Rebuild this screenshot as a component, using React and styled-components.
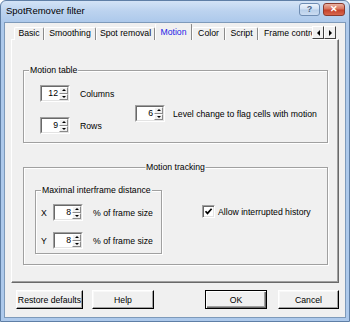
import React from "react";
import styled, { createGlobalStyle } from "styled-components";

const GlobalStyle = createGlobalStyle`
  html, body { margin: 0; padding: 0; }
  body {
    width: 350px; height: 322px; overflow: hidden; background: #fff;
    font-family: "Liberation Sans", Arial, sans-serif; font-size: 8.7px; color: #000;
  }
  #root { width: 350px; height: 322px; }
`;

const Window = styled.div`
  box-sizing: border-box;
  width: 350px;
  height: 322px;
  border: 1px solid #5f7fa6;
  border-radius: 6px 6px 0 0;
  background: linear-gradient(#d3e3f6 0px, #bcd3ef 10px, #adc9eb 21px, #adc9eb 100%);
  display: flex;
  flex-direction: column;
  padding: 0 3px 3px;
`;

const TitleBar = styled.div`
  height: 21px;
  display: flex;
  align-items: flex-start;
  padding: 0 1px 0 2px;
`;

const Title = styled.span`
  font-size: 9.5px;
  line-height: 12px;
  margin-top: 4px;
  color: #000;
`;

const CaptionButtons = styled.div`
  margin-left: auto;
  margin-top: 2px;
  display: flex;
  gap: 3px;
`;

const CaptionButton = styled.div`
  box-sizing: border-box;
  width: ${(p) => p.$w}px;
  height: 13px;
  border: 1px solid ${(p) => (p.$close ? "#8a3a2e" : "#6f8db3")};
  border-radius: 3px;
  background: ${(p) =>
    p.$close
      ? "linear-gradient(#eab3a4 0%, #d9735c 45%, #c4412b 55%, #d8664c 100%)"
      : "linear-gradient(#eef4fb 0%, #d3e2f4 45%, #b9cfea 55%, #cbdcf1 100%)"};
  display: flex;
  align-items: center;
  justify-content: center;
  font-size: 9px;
  font-weight: bold;
  color: ${(p) => (p.$close ? "#fff" : "#4a6384")};
  line-height: 1;
`;

const Client = styled.div`
  flex: 1;
  background: #f0f0f0;
  border: 1px solid #7e9aba;
  display: flex;
  flex-direction: column;
  padding: 1px 6px 0;
`;

const TabStrip = styled.div`
  display: flex;
  align-items: flex-end;
  height: 16px;
  margin-left: 3px;
  margin-bottom: -1px;
  position: relative;
  z-index: 1;
`;

const TabList = styled.div`
  display: flex;
  align-items: flex-end;
  width: 298px;
  height: 16px;
  overflow: hidden;
`;

const Tab = styled.div`
  flex: 0 0 auto;
  box-sizing: border-box;
  width: ${(p) => p.$w}px;
  height: ${(p) => (p.$active ? 17 : 13)}px;
  padding-top: ${(p) => (p.$active ? 3 : 0)}px;
  border-left: 1px solid #fff;
  border-top: 1px solid #fff;
  border-right: 1px solid #8a8a8a;
  border-radius: 2px 2px 0 0;
  background: #f0f0f0;
  color: ${(p) => (p.$active ? "#1c1ce6" : "#000")};
  text-align: ${(p) => (p.$clip ? "left" : "center")};
  padding-left: ${(p) => (p.$clip ? 5 : 0)}px;
  white-space: nowrap;
  line-height: 11px;
`;

const TabArrows = styled.div`
  display: flex;
  margin-bottom: 1px;
`;

const ArrowButton = styled.div`
  box-sizing: border-box;
  width: 12px;
  height: 13px;
  background: #f0f0f0;
  border: 1px solid;
  border-color: #fff #404040 #404040 #fff;
  display: flex;
  align-items: center;
  justify-content: center;
  &::after {
    content: "";
    border-top: 3px solid transparent;
    border-bottom: 3px solid transparent;
    ${(p) => (p.$left ? "border-right: 3px solid #000;" : "border-left: 3px solid #000;")}
  }
`;

const Panel = styled.div`
  box-sizing: border-box;
  height: 244px;
  border: 1px solid;
  border-color: #fff #696969 #696969 #fff;
  box-shadow: inset -1px -1px 0 #a0a0a0;
  padding: 30px 10px 0 11px;
  display: flex;
  flex-direction: column;
`;

const Group = styled.div`
  position: relative;
  box-sizing: border-box;
  width: ${(p) => (p.$w ? `${p.$w}px` : "auto")};
  height: ${(p) => p.$h}px;
  margin-top: ${(p) => p.$mt || 0}px;
  border: 1px solid #a0a0a0;
  box-shadow: inset 1px 1px 0 #fff, 1px 1px 0 #fff;
  padding: ${(p) => p.$pad};
  display: flex;
  align-items: flex-start;
  flex-shrink: 0;
`;

const GroupLabel = styled.span`
  position: absolute;
  top: -6px;
  left: ${(p) => (p.$center ? "50%" : `${p.$left}px`)};
  transform: ${(p) => (p.$center ? "translateX(-50%)" : "none")};
  background: #f0f0f0;
  padding: 0 1px;
  line-height: 11px;
  white-space: nowrap;
`;

const Column = styled.div`
  display: flex;
  flex-direction: column;
  gap: ${(p) => p.$gap || 0}px;
  width: ${(p) => (p.$w ? `${p.$w}px` : "auto")};
  padding-top: ${(p) => p.$pt || 0}px;
`;

const SpinRow = styled.div`
  display: flex;
  align-items: center;
  gap: ${(p) => p.$gap}px;
  white-space: nowrap;
`;

const SpinOuter = styled.div`
  box-sizing: border-box;
  width: 30px;
  height: 17px;
  border: 1px solid;
  border-color: #a0a0a0 #fff #fff #a0a0a0;
  display: flex;
`;

const SpinInner = styled.div`
  flex: 1;
  display: flex;
  background: #fff;
  border: 1px solid;
  border-color: #696969 #e3e3e3 #e3e3e3 #696969;
`;

const SpinValue = styled.span`
  flex: 1;
  text-align: right;
  line-height: 13px;
  padding-right: 1px;
`;

const SpinButtons = styled.div`
  width: 9px;
  display: flex;
  flex-direction: column;
`;

const SpinButton = styled.div`
  flex: 1;
  box-sizing: border-box;
  background: #f0f0f0;
  border: 1px solid;
  border-color: #fff #8a8a8a #8a8a8a #fff;
  display: flex;
  align-items: center;
  justify-content: center;
  &::after {
    content: "";
    border-left: 2px solid transparent;
    border-right: 2px solid transparent;
    ${(p) => (p.$up ? "border-bottom: 2px solid #000;" : "border-top: 2px solid #000;")}
  }
`;

const AxisGrid = styled.div`
  display: grid;
  grid-template-columns: 12px 30px auto;
  row-gap: 11px;
  align-items: center;
  white-space: nowrap;
`;

const AxisText = styled.span`
  margin-left: ${(p) => p.$ml || 0}px;
`;

const CheckRow = styled.label`
  display: flex;
  align-items: center;
  gap: 3px;
  margin-left: 40px;
  margin-top: 15px;
  white-space: nowrap;
`;

const CheckBox = styled.span`
  box-sizing: border-box;
  width: 13px;
  height: 13px;
  background: #fff;
  border: 1px solid;
  border-color: #a0a0a0 #fff #fff #a0a0a0;
  box-shadow: inset 1px 1px 0 #696969, inset -1px -1px 0 #e3e3e3;
  display: flex;
  align-items: center;
  justify-content: center;
`;

const ButtonRow = styled.div`
  display: flex;
  margin-top: 7px;
  padding-left: 5px;
`;

const PushButton = styled.div`
  box-sizing: border-box;
  width: ${(p) => p.$w}px;
  height: 19px;
  margin-left: ${(p) => (p.$auto ? "auto" : `${p.$ml || 0}px`)};
  background: #f0f0f0;
  border: 1px solid;
  border-color: ${(p) => (p.$default ? "#000" : "#fff #000 #000 #fff")};
  box-shadow: ${(p) =>
    p.$default
      ? "inset 1px 1px 0 #fff, inset -1px -1px 0 #696969, inset -2px -2px 0 #a0a0a0"
      : "inset -1px -1px 0 #a0a0a0, inset 1px 1px 0 #f8f8f8"};
  display: flex;
  align-items: center;
  justify-content: center;
  white-space: nowrap;
`;

function SpinBox({ value }) {
  return (
    <SpinOuter>
      <SpinInner>
        <SpinValue>{value}</SpinValue>
        <SpinButtons>
          <SpinButton $up />
          <SpinButton />
        </SpinButtons>
      </SpinInner>
    </SpinOuter>
  );
}

const tabs = [
  { label: "Basic", w: 30 },
  { label: "Smoothing", w: 52 },
  { label: "Spot removal", w: 59 },
  { label: "Motion", w: 37, active: true },
  { label: "Color", w: 33 },
  { label: "Script", w: 33 },
  { label: "Frame control", w: 64, clip: true },
];

export default function App() {
  return (
    <>
      <GlobalStyle />
      <Window>
        <TitleBar>
          <Title>SpotRemover filter</Title>
          <CaptionButtons>
            <CaptionButton $w={21}>?</CaptionButton>
            <CaptionButton $w={22} $close>✕</CaptionButton>
          </CaptionButtons>
        </TitleBar>
        <Client>
          <TabStrip>
            <TabList>
              {tabs.map((t) => (
                <Tab key={t.label} $w={t.w} $active={t.active} $clip={t.clip}>
                  {t.label}
                </Tab>
              ))}
            </TabList>
            <TabArrows>
              <ArrowButton $left />
              <ArrowButton />
            </TabArrows>
          </TabStrip>
          <Panel>
            <Group $h={73} $pad="14px 0 0 16px">
              <GroupLabel $left={5}>Motion table</GroupLabel>
              <Column $w={95} $gap={15}>
                <SpinRow $gap={10}>
                  <SpinBox value="12" />
                  <span>Columns</span>
                </SpinRow>
                <SpinRow $gap={10}>
                  <SpinBox value="9" />
                  <span>Rows</span>
                </SpinRow>
              </Column>
              <Column $pt={20}>
                <SpinRow $gap={8}>
                  <SpinBox value="6" />
                  <span>Level change to flag cells with motion</span>
                </SpinRow>
              </Column>
            </Group>
            <Group $h={98} $mt={24} $pad="22px 0 0 11px">
              <GroupLabel $center>Motion tracking</GroupLabel>
              <Group $w={127} $h={64} $pad="13px 0 0 5px">
                <GroupLabel $left={5}>Maximal interframe distance</GroupLabel>
                <AxisGrid>
                  <span>X</span>
                  <SpinBox value="8" />
                  <AxisText $ml={10}>% of frame size</AxisText>
                  <span>Y</span>
                  <SpinBox value="8" />
                  <AxisText $ml={10}>% of frame size</AxisText>
                </AxisGrid>
              </Group>
              <CheckRow>
                <CheckBox>
                  <svg width="9" height="9" viewBox="0 0 9 9">
                    <path d="M1.5 4.2 L3.5 6.4 L7.6 1.8" fill="none" stroke="#000" strokeWidth="1.7" />
                  </svg>
                </CheckBox>
                <span>Allow interrupted history</span>
              </CheckRow>
            </Group>
          </Panel>
          <ButtonRow>
            <PushButton $w={67}>Restore defaults</PushButton>
            <PushButton $w={62} $ml={9}>Help</PushButton>
            <PushButton $w={62} $auto $default>OK</PushButton>
            <PushButton $w={61} $ml={11}>Cancel</PushButton>
          </ButtonRow>
        </Client>
      </Window>
    </>
  );
}
